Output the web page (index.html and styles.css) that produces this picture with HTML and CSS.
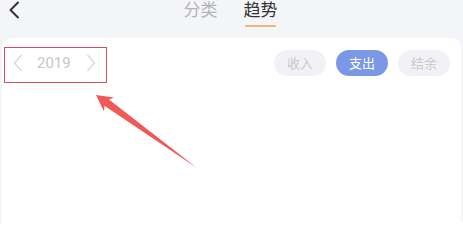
FILE: index.html
```html
<!DOCTYPE html>
<html>
  <head>
  <link rel="stylesheet" href="styles.css">
  </head>
  <body>
    <div class="page">
      <div class="header">
        <div class="back">
          <svg width="12" height="18" viewBox="0 0 12 18"><polyline points="10,1.5 2.5,9 10,16.5" fill="none" stroke="#333" stroke-width="2" stroke-linecap="round" stroke-linejoin="round"/></svg>
        </div>
        <div class="tabs">
          <div class="tab">分类</div>
          <div class="tab tab_on">趋势<span class="tab_line"></span></div>
        </div>
        <div></div>
      </div>
      <div class="card">
        <div class="toolbar">
          <div class="year">
            <svg width="10" height="18" viewBox="0 0 10 18"><polyline points="8.5,1 1.5,9 8.5,17" fill="none" stroke="#dadade" stroke-width="1.5"/></svg>
            <span class="year_num">2019</span>
            <svg width="10" height="18" viewBox="0 0 10 18"><polyline points="1.5,1 8.5,9 1.5,17" fill="none" stroke="#dadade" stroke-width="1.5"/></svg>
          </div>
          <div class="types">
            <div class="type_btn">收入</div>
            <div class="type_btn type_on">支出</div>
            <div class="type_btn">结余</div>
          </div>
        </div>
      </div>
    </div>
    <div class="mark_box"></div>
    <svg class="mark_arrow" width="463" height="240" viewBox="0 0 463 240">
      <polygon points="96,95 114,97.5 109,99.6 197,168 104.4,105.8 104,111.5" fill="#f25858"/>
    </svg>
  </body>
</html>
```

FILE: styles.css
```css
body {
  margin: 0;
  background-color: #ffffff;
  font-family: "Noto Sans CJK SC", "Noto Sans", sans-serif;
}
.page {
  background-color: #f4f5f9;
  height: 223px;
  padding: 0 2px;
}
.header {
  height: 38px;
  display: grid;
  grid-template-columns: 1fr auto 1fr;
}
.back {
  padding: 0 0 0 6px;
  height: 19px;
  display: flex;
  align-items: center;
}
.tabs {
  display: flex;
  gap: 26px;
  margin-left: -2px;
}
.tab {
  position: relative;
  font-size: 17px;
  line-height: 17px;
  color: #b4b4b9;
}
.tab_on { color: #333333; }
.tab_line {
  position: absolute;
  left: 1px;
  right: 2px;
  top: 25px;
  height: 2px;
  border-radius: 1px;
  background-color: #f6b56f;
}
.card {
  background-color: #ffffff;
  border-radius: 10px 10px 0 0;
  height: 185px;
}
.toolbar {
  display: flex;
  justify-content: space-between;
  align-items: center;
  padding: 12px 11px 0 11px;
}
.year {
  display: flex;
  align-items: center;
  gap: 14px;
}
.year_num {
  font-family: Roboto, sans-serif;
  font-size: 15px;
  color: #c6c6cb;
  width: 35px;
}
.types {
  display: flex;
  gap: 10px;
}
.type_btn {
  width: 52px;
  height: 26px;
  line-height: 26px;
  border-radius: 13px;
  text-align: center;
  font-size: 13px;
  background-color: #f1f2f6;
  color: #c9c9ce;
}
.type_on {
  background-color: #7a98e6;
  color: #ffffff;
}
.mark_box {
  position: absolute;
  left: 4px;
  top: 47px;
  width: 101px;
  height: 34px;
  border: 1.5px solid #d6505c;
}
.mark_arrow {
  position: absolute;
  left: 0;
  top: 0;
}
```
